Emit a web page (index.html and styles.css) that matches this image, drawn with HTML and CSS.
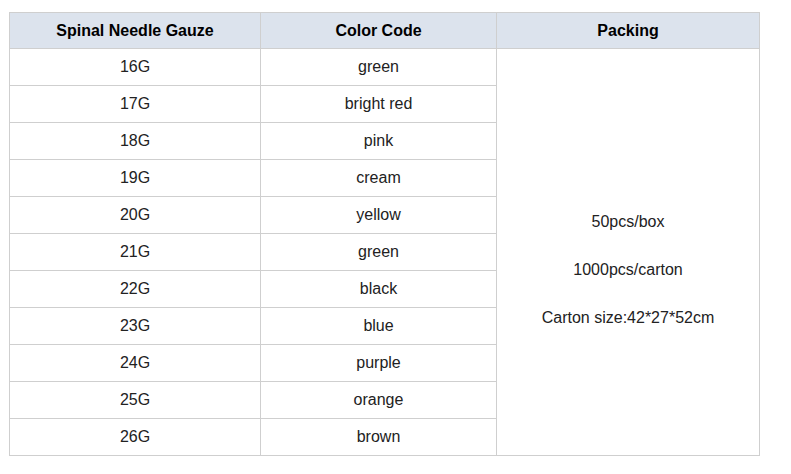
FILE: index.html
```html
<!DOCTYPE html>
<html>
<head>
<meta charset="utf-8">
<link rel="stylesheet" href="styles.css">
</head>
<body>
<table class="spec">
  <colgroup>
    <col class="c1">
    <col class="c2">
    <col class="c3">
  </colgroup>
  <thead>
    <tr><th>Spinal Needle Gauze</th><th>Color Code</th><th>Packing</th></tr>
  </thead>
  <tbody>
    <tr><td>16G</td><td>green</td><td class="pack" rowspan="11">50pcs/box<br><br>1000pcs/carton<br><br>Carton size:42*27*52cm</td></tr>
    <tr><td>17G</td><td>bright red</td></tr>
    <tr><td>18G</td><td>pink</td></tr>
    <tr><td>19G</td><td>cream</td></tr>
    <tr><td>20G</td><td>yellow</td></tr>
    <tr><td>21G</td><td>green</td></tr>
    <tr><td>22G</td><td>black</td></tr>
    <tr><td>23G</td><td>blue</td></tr>
    <tr><td>24G</td><td>purple</td></tr>
    <tr><td>25G</td><td>orange</td></tr>
    <tr><td>26G</td><td>brown</td></tr>
  </tbody>
</table>
</body>
</html>
```
FILE: styles.css
```css
html, body {
  margin: 0;
  padding: 0;
  background: #fff;
}
body {
  font-family: "Liberation Sans", Arial, sans-serif;
  font-size: 16px;
  color: #222;
}
.spec {
  border-collapse: collapse;
  table-layout: fixed;
  width: 750px;
  margin: 12px 0 0 9px;
}
.c1 { width: 251px; }
.c2 { width: 236px; }
.c3 { width: 263px; }
.spec th,
.spec td {
  border: 1px solid #cfcfcf;
  text-align: center;
  vertical-align: middle;
  padding: 0;
  line-height: 18px;
}
.spec th {
  background: #dce3ed;
  color: #000;
  font-weight: bold;
  height: 35px;
}
.spec td {
  height: 36px;
}
.spec td.pack {
  line-height: 24px;
  padding-top: 36px;
}
```
